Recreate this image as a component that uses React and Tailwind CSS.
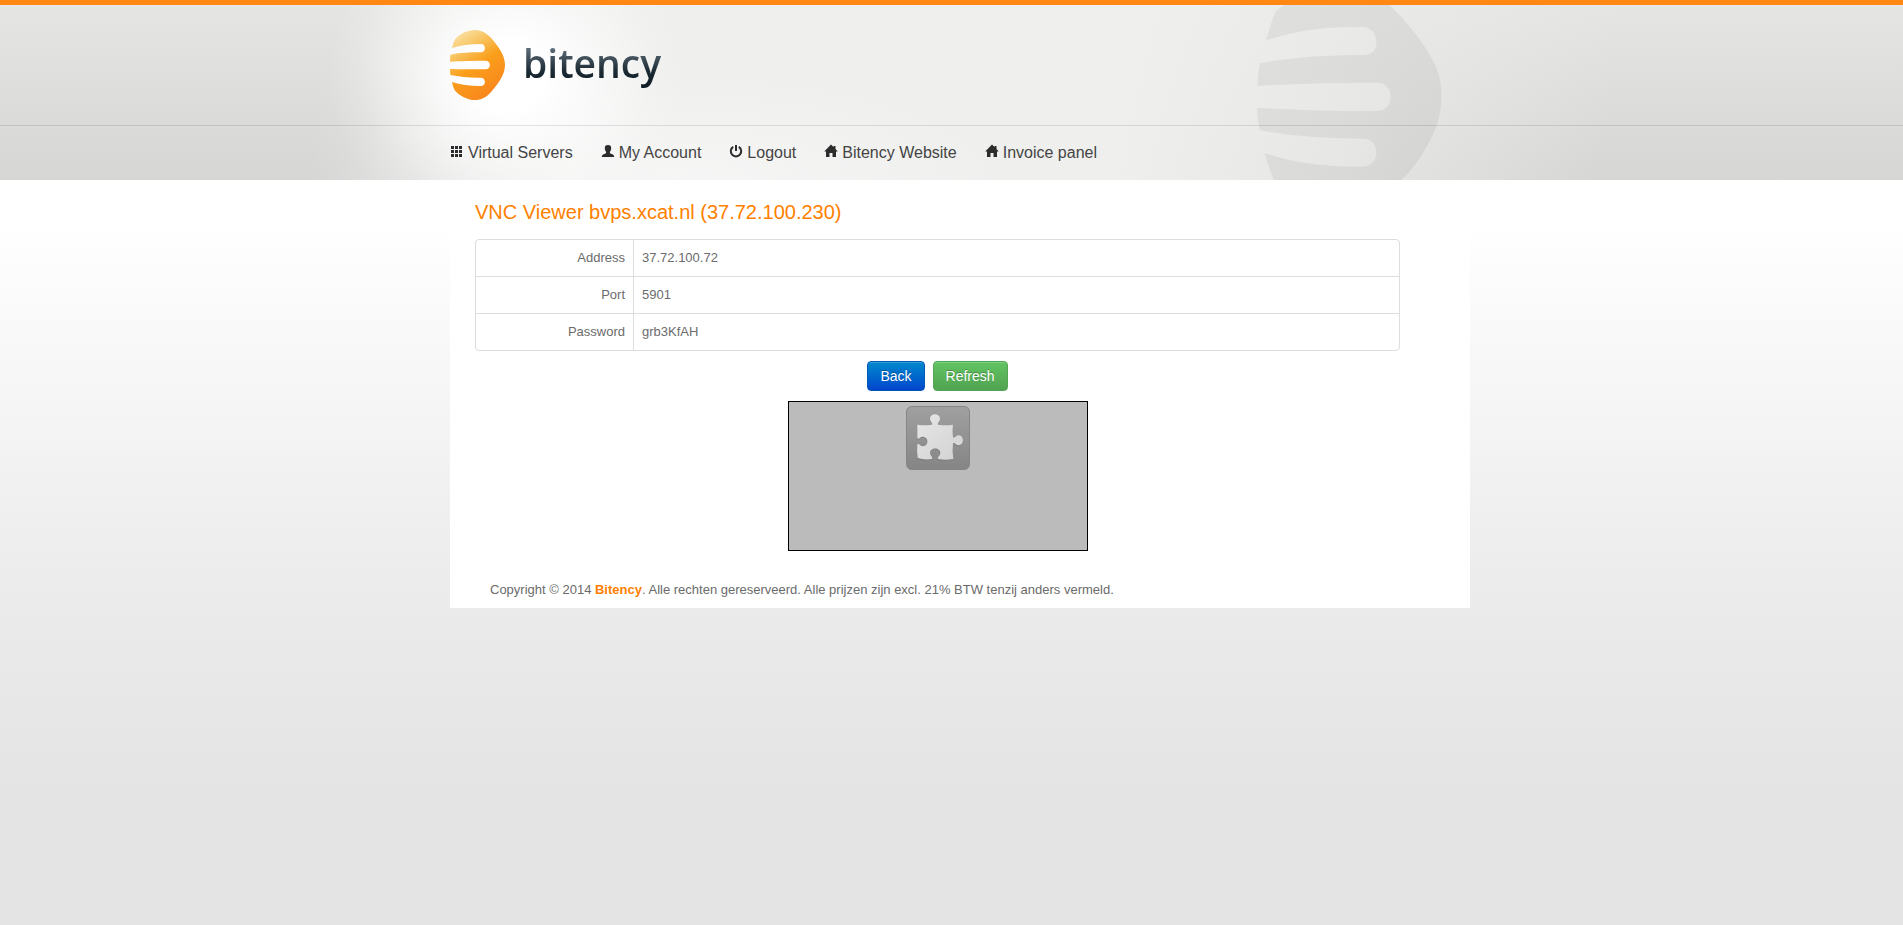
import { clsx } from 'clsx';

const GridIcon = () => (
  <path d="M1 2h3v3H1zM5 2h3v3H5zM9 2h3v3H9zM1 6h3v3H1zM5 6h3v3H5zM9 6h3v3H9zM1 10h3v3H1zM5 10h3v3H5zM9 10h3v3H9z" />
);

const UserIcon = () => (
  <path d="M7 1c2.300 0 3.200 1.200 3.200 3.200 0 1.600-.6 2.600-1.400 3.700 0 1.200.5 1.500 1.900 2 1.700.6 2.500 1.200 2.500 3.100H.8c0-1.900.8-2.500 2.500-3.100 1.400-.5 1.900-.8 1.900-2C4.400 6.800 3.800 5.800 3.800 4.200 3.800 2.200 4.700 1 7 1z" />
);

const PowerIcon = () => (
  <>
    <path d="M4.200 2.800A5.200 5.200 0 1 0 9.800 2.800" fill="none" stroke="currentColor" strokeWidth="2" />
    <path d="M6 1h2v6H6z" />
  </>
);

const HomeIcon = () => <path d="M7 .6 9.500 3.100V2h2v3.100L13.800 7.500H12V13H8.500V9H5.500v4H2V7.500H.2z" />;

const navItems = [
  { label: 'Virtual Servers', Icon: GridIcon },
  { label: 'My Account', Icon: UserIcon },
  { label: 'Logout', Icon: PowerIcon },
  { label: 'Bitency Website', Icon: HomeIcon },
  { label: 'Invoice panel', Icon: HomeIcon },
];

const connection = [
  { label: 'Address', value: '37.72.100.72' },
  { label: 'Port', value: '5901' },
  { label: 'Password', value: 'grb3KfAH' },
];

const Logo = () => (
  <a href="#" className="flex w-fit items-center" aria-label="bitency">
    <svg viewBox="60 90 165 210" className="h-[70px] w-[55px]" aria-hidden="true">
      <defs>
        <linearGradient id="logo-fill" x1="0.1" y1="0" x2="0.6" y2="1">
          <stop offset="0" stopColor="#fbe6b4" />
          <stop offset="0.25" stopColor="#f8ca6c" />
          <stop offset="0.55" stopColor="#fa9f1c" />
          <stop offset="1" stopColor="#f8861c" />
        </linearGradient>
      </defs>
      <path
        fill="url(#logo-fill)"
        d="M66 144C69 130 73 120 78 114C92 101 112 90 134 90C153 90 169 98 184 115C205 139 225 166 225 195C225 223 206 250 184 275C169 292 153 300 134 300C112 300 88 286 75 272C71 265 68 256 66 246C90 254 118 258 152 258C169 258 169 233 152 233C122 234 90 230 61 225L60 207C90 208 130 208 166 208C184 208 184 182 166 182C130 182 90 183 60 185L61 164C90 158 120 157 152 157C169 157 169 132 152 132C120 132 90 136 66 144Z"
      />
    </svg>
    <span className="ml-[18px] bg-linear-to-b from-[#5b6b75] from-25% via-[#1c2a34] via-60% to-[#06131c] bg-clip-text pb-1 font-['Open_Sans',sans-serif] text-[39px] leading-[58px] font-semibold text-transparent">
      bitency
    </span>
  </a>
);

const Watermark = () => (
  <svg
    viewBox="170 15 555 525"
    className="pointer-events-none absolute top-0 left-[807px] h-[175px] w-[185px]"
    aria-hidden="true"
  >
    <path
      fill="#000"
      fillOpacity="0.055"
      d="M252 15H568C620 66 670 125 702 190C717 221 723 250 723 291C723 330 716 365 700 398C678 448 645 500 603 540H220C210 515 201 490 193 459C265 484 350 500 482 500C512 500 528 482 528 458C528 432 512 416 490 416C370 416 270 408 178 391C174 370 171 347 170 323C270 329 380 333 528 333C555 333 571 315 571 291C571 266 555 248 528 248C400 248 270 251 171 258C172 235 175 212 179 190C270 173 370 165 490 165C514 165 528 150 528 127C528 100 512 81 484 81C350 80 290 94 197 121C205 92 214 62 226 34C234 27 243 20 252 15Z"
    />
  </svg>
);

const PIECE =
  'M442 254Q464 258 486 254C489 249 480 245 480 236C480 218 510 218 510 236C510 245 501 249 504 254Q526 258 549 254Q546 273 549 292C555 296 557 286 566 286C583 286 583 316 566 316C557 316 555 306 549 310Q546 333 550 357Q526 361 504 357C501 352 511 347 511 339C511 321 480 321 480 339C480 347 490 352 486 357Q464 361 443 354Q440 334 442 313C448 309 450 319 458 319C477 319 477 290 458 290C450 290 446 300 442 295Z';

const PluginIcon = () => (
  <svg viewBox="408 198 192 192" className="size-16" aria-hidden="true">
    <defs>
      <linearGradient id="plugin-tile" x1="0" y1="0" x2="0" y2="1">
        <stop offset="0" stopColor="#a0a0a0" />
        <stop offset="1" stopColor="#858585" />
      </linearGradient>
      <linearGradient id="plugin-piece" x1="0" y1="0" x2="1" y2="1">
        <stop offset="0" stopColor="#e6e6e6" />
        <stop offset="1" stopColor="#d2d2d2" />
      </linearGradient>
    </defs>
    <rect x="409.500" y="199.500" width="189" height="189" rx="16" fill="url(#plugin-tile)" stroke="#858585" strokeWidth="3" />
    <path fill="#6f6f6f" fillOpacity="0.5" transform="translate(-1 3)" d={PIECE} />
    <path fill="url(#plugin-piece)" d={PIECE} />
  </svg>
);

const Button = ({ className, children }) => (
  <button
    type="button"
    className={clsx(
      'h-[30px] rounded border px-3 text-sm leading-5 text-white inset-shadow-[0_1px_0_rgba(255,255,255,0.2)] text-shadow-[0_-1px_0_rgba(0,0,0,0.25)]',
      className
    )}
  >
    {children}
  </button>
);

const Header = () => (
  <header className="border-t-[5px] border-[#ff8814] bg-linear-to-b from-[#e5e5e3] to-[#d6d6d4]">
    <div className="bg-[radial-gradient(ellipse_180px_160px_at_calc(50%-445px)_70px,#fff_0%,#fff_22%,rgba(255,255,255,0.5)_55%,rgba(255,255,255,0.12)_82%,transparent_100%),radial-gradient(ellipse_340px_110px_at_calc(50%-280px)_100%,rgba(255,255,255,0.45),transparent),linear-gradient(100deg,transparent_calc(50%-620px),#efefee_calc(50%-360px),#efefee_calc(50%+170px),rgba(235,235,234,0.75)_calc(50%+400px),transparent_calc(50%+650px))]">
      {/* Logo */}
      <div className="mx-auto max-w-[1037px] pl-[17px]">
        <div className="relative">
          <Watermark />
          <div className="flex h-[120px] items-center">
            <Logo />
          </div>
        </div>
      </div>

      {/* Navigation */}
      <div className="border-t border-black/10">
        <nav className="mx-auto flex h-[54px] max-w-[1037px] items-center gap-7 pl-[17px]">
          {navItems.map(({ label, Icon }) => (
            <a key={label} href="#" className="flex items-center gap-1 text-base whitespace-nowrap text-[#444]">
              <svg viewBox="0 0 14 14" fill="currentColor" className="mb-1 size-3.5 text-[#2c2c2c]" aria-hidden="true">
                <Icon />
              </svg>
              {label}
            </a>
          ))}
        </nav>
      </div>
    </div>
  </header>
);

const App = () => (
  <div className="flex min-h-screen flex-col bg-[#e4e4e4] font-['Liberation_Sans',Arial,sans-serif] text-[13px] leading-5 text-[#6b6b6b]">
    <Header />

    <div className="flex-1 bg-linear-to-b from-white from-[40px] via-[#ebebeb] via-[420px] to-[#e4e4e4] to-[620px]">
      <div className="mx-auto max-w-[1037px] pl-[17px]">
        <div className="bg-white">
          <main className="pt-4 pr-[70px] pl-[25px]">
            <h1 className="mb-[11px] text-xl leading-8 text-[#ff7f00]">VNC Viewer bvps.xcat.nl (37.72.100.230)</h1>

            {/* Connection details */}
            <table className="w-full table-fixed border-separate border-spacing-0 rounded border border-[#ddd]">
              <tbody>
                {connection.map(({ label, value }, index) => (
                  <tr key={label}>
                    <th
                      scope="row"
                      className={clsx(
                        'w-[157px] p-2 text-right font-normal',
                        index > 0 && 'border-t border-[#ddd]'
                      )}
                    >
                      {label}
                    </th>
                    <td className={clsx('border-l border-[#ddd] p-2', index > 0 && 'border-t')}>{value}</td>
                  </tr>
                ))}
              </tbody>
            </table>

            <div className="mt-2.5 flex justify-center gap-2">
              <Button className="border-[#0055b8] bg-linear-to-b from-[#0088cc] to-[#0044cc]">Back</Button>
              <Button className="border-[#52a552] bg-linear-to-b from-[#62c462] to-[#51a351]">Refresh</Button>
            </div>

            {/* Viewer applet */}
            <div className="mx-auto mt-2.5 flex h-[150px] w-[300px] justify-center border border-black bg-[#bbb] pt-1">
              <PluginIcon />
            </div>
          </main>

          <footer className="px-10 pt-[29px] pb-2">
            Copyright © 2014{' '}
            <a href="#" className="font-bold text-[#ff7f00]">
              Bitency
            </a>
            . Alle rechten gereserveerd. Alle prijzen zijn excl. 21% BTW tenzij anders vermeld.
          </footer>
        </div>
      </div>
    </div>
  </div>
);

export default App;
